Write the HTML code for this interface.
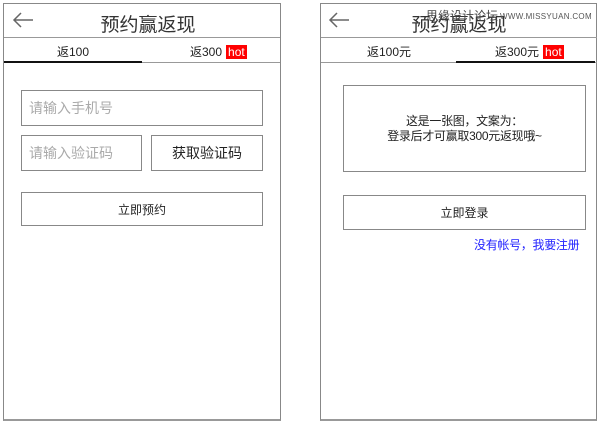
<!DOCTYPE html>
<html><head><meta charset="utf-8"><style>
body{margin:0;width:600px;height:423px;background:#fff;position:relative;font-family:"Liberation Sans","Noto Sans CJK SC",sans-serif;color:#222;overflow:hidden}
.a{position:absolute;box-sizing:border-box}
.fr{border:1px solid #888;border-bottom:2px solid #999}
.b{border:1px solid #888;display:flex;align-items:center;justify-content:center}
.hl{height:1px;background:#999}
.hot{background:#f00;color:#fff;padding:0 2px;font-size:12px;margin-left:4px}
</style></head><body>
<!-- left -->
<div class="a fr" style="left:3px;top:3px;width:278px;height:418px"></div>
<svg class="a" style="left:12px;top:11px" width="22" height="18"><path d="M21 9H2M9 2L2 9l7 7" stroke="#666" stroke-width="1.5" fill="none"/></svg>
<div class="a" style="left:4px;width:288px;top:10px;text-align:center;font-size:19px;color:#333">预约赢返现</div>
<div class="a hl" style="left:4px;width:276px;top:37px"></div>
<div class="a" style="left:57px;top:43px;font-size:12px">返100</div>
<div class="a" style="left:190px;top:43px;font-size:12px">返300<span class="hot">hot</span></div>
<div class="a hl" style="left:4px;width:276px;top:62px"></div>
<div class="a" style="left:4px;width:138px;top:61px;height:2px;background:#111"></div>
<div class="a b" style="left:21px;top:90px;width:242px;height:36px;justify-content:flex-start;padding-left:7px;color:#aaa;font-size:14px">请输入手机号</div>
<div class="a b" style="left:21px;top:135px;width:121px;height:36px;justify-content:flex-start;padding-left:7px;color:#aaa;font-size:14px">请输入验证码</div>
<div class="a b" style="left:151px;top:135px;width:112px;height:36px;font-size:14px">获取验证码</div>
<div class="a b" style="left:21px;top:192px;width:242px;height:34px;font-size:12px">立即预约</div>
<!-- right -->
<div class="a fr" style="left:320px;top:3px;width:277px;height:418px"></div>
<svg class="a" style="left:328px;top:11px" width="22" height="18"><path d="M21 9H2M9 2L2 9l7 7" stroke="#666" stroke-width="1.5" fill="none"/></svg>
<div class="a" style="left:321px;width:276px;top:10px;text-align:center;font-size:19px;color:#333">预约赢返现</div>
<div class="a" style="left:426px;top:7px;font-size:12px;color:#444">思缘设计论坛</div>
<div class="a" style="left:500px;top:12px;font-size:8px;color:#555;letter-spacing:0.3px">WWW.MISSYUAN.COM</div>
<div class="a hl" style="left:321px;width:276px;top:37px"></div>
<div class="a" style="left:367px;top:43px;font-size:12px">返100元</div>
<div class="a" style="left:495px;top:43px;font-size:12px">返300元<span class="hot">hot</span></div>
<div class="a hl" style="left:321px;width:276px;top:62px"></div>
<div class="a" style="left:456px;width:139px;top:61px;height:2px;background:#111"></div>
<div class="a b" style="left:343px;top:85px;width:243px;height:87px;font-size:12px;text-align:center;line-height:15px;letter-spacing:-0.3px">这是一张图，文案为：<br>登录后才可赢取300元返现哦~</div>
<div class="a b" style="left:343px;top:195px;width:243px;height:35px;font-size:12px">立即登录</div>
<div class="a" style="left:474px;top:236px;font-size:12px;color:#22f;letter-spacing:-0.3px">没有帐号，我要注册</div>
</body></html>
